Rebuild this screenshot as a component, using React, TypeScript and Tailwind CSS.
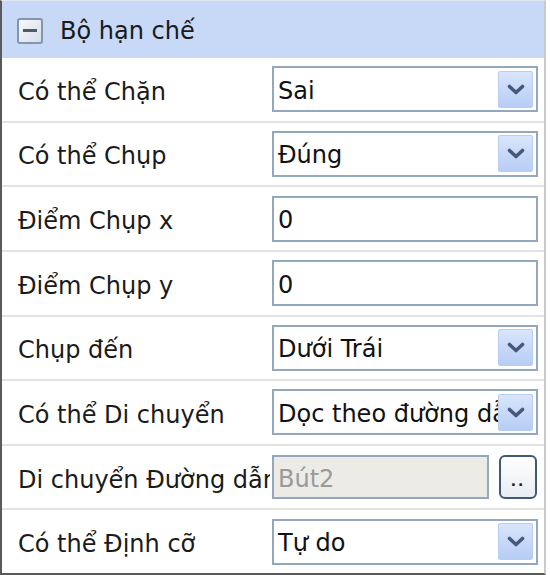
import React from 'react';

type Row = {
  label: string;
  value: string;
  kind: 'select' | 'text' | 'path';
};

const rows: Row[] = [
  { label: 'Có thể Chặn', value: 'Sai', kind: 'select' },
  { label: 'Có thể Chụp', value: 'Đúng', kind: 'select' },
  { label: 'Điểm Chụp x', value: '0', kind: 'text' },
  { label: 'Điểm Chụp y', value: '0', kind: 'text' },
  { label: 'Chụp đến', value: 'Dưới Trái', kind: 'select' },
  { label: 'Có thể Di chuyển', value: 'Dọc theo đường dẫn', kind: 'select' },
  { label: 'Di chuyển Đường dẫn', value: 'Bút2', kind: 'path' },
  { label: 'Có thể Định cỡ', value: 'Tự do', kind: 'select' },
];

const font = { fontFamily: '"DejaVu Sans", sans-serif' };

const DropButton = () => (
  <div className="w-[35px] h-[37px] mr-[3px] flex-none flex items-center justify-center rounded-[2px] border border-[#b9cdf2] bg-gradient-to-b from-[#d9e5fb] to-[#b7cdf5]">
    <svg width="20" height="13" viewBox="0 0 20 13">
      <path d="M3.5 3.5 L10 9.5 L16.5 3.5" fill="none" stroke="#45597f" strokeWidth="3.6" strokeLinecap="round" strokeLinejoin="round" />
    </svg>
  </div>
);

const Field = ({ row }: { row: Row }) => {
  if (row.kind === 'path') {
    return (
      <div className="flex items-center gap-[10px]">
        <div className="w-[217px] h-[44px] border-2 border-[#93a7bf] bg-[#ecebe6] flex items-center pl-[4px] pt-[3px] overflow-hidden">
          <span className="text-[24px] text-[#9a9a9a] whitespace-nowrap">{row.value}</span>
        </div>
        <div className="w-[38px] h-[44px] rounded-[6px] border-2 border-[#3f5a76] bg-gradient-to-b from-white to-[#e9ecf0] flex items-end justify-center pb-[9px]">
          <span className="text-[14px] leading-none text-[#222] font-bold tracking-[2px]">..</span>
        </div>
      </div>
    );
  }
  return (
    <div className="w-[266px] h-[46px] border-2 border-[#93a7bf] bg-white flex items-center overflow-hidden">
      <span className="flex-1 min-w-0 pl-[4px] pt-[3px] text-[24px] text-[#111] whitespace-nowrap overflow-hidden">{row.value}</span>
      {row.kind === 'select' && <DropButton />}
    </div>
  );
};

export default function App() {
  return (
    <div className="w-[550px] h-[575px] bg-white" style={font}>
      <div className="w-[546px] h-[575px] flex flex-col border-l-2 border-b-2 border-[#5a5a5a] border-r-2 border-r-[#c9c9c9] border-t border-t-[#e2e8f2]">
        {/* Header */}
        <div className="h-[57px] flex-none bg-[#c7d9f7] flex items-center pl-[15px] gap-[17px]">
          <div className="w-[26px] h-[26px] mt-[2px] rounded-[3px] border-2 border-[#8296ae] bg-gradient-to-br from-[#f7f9fc] to-[#d7dee9] flex items-center justify-center">
            <div className="w-[14px] h-[3px] bg-[#4f5b6b]" />
          </div>
          <span className="text-[24px] pt-[2px] text-[#1a1a1a]">Bộ hạn chế</span>
        </div>
        {/* Rows */}
        {rows.map((row, i) => (
          <div
            key={row.label}
            className={`flex-1 flex items-center ${i < rows.length - 1 ? 'border-b-2 border-[#e3e3e3]' : ''}`}
          >
            <div className="w-[268px] flex-none pl-[16px] pt-[5px] overflow-hidden whitespace-nowrap text-[24px] text-[#1a1a1a]">
              {row.label}
            </div>
            <div className="pl-[2px]">
              <Field row={row} />
            </div>
          </div>
        ))}
      </div>
    </div>
  );
}
